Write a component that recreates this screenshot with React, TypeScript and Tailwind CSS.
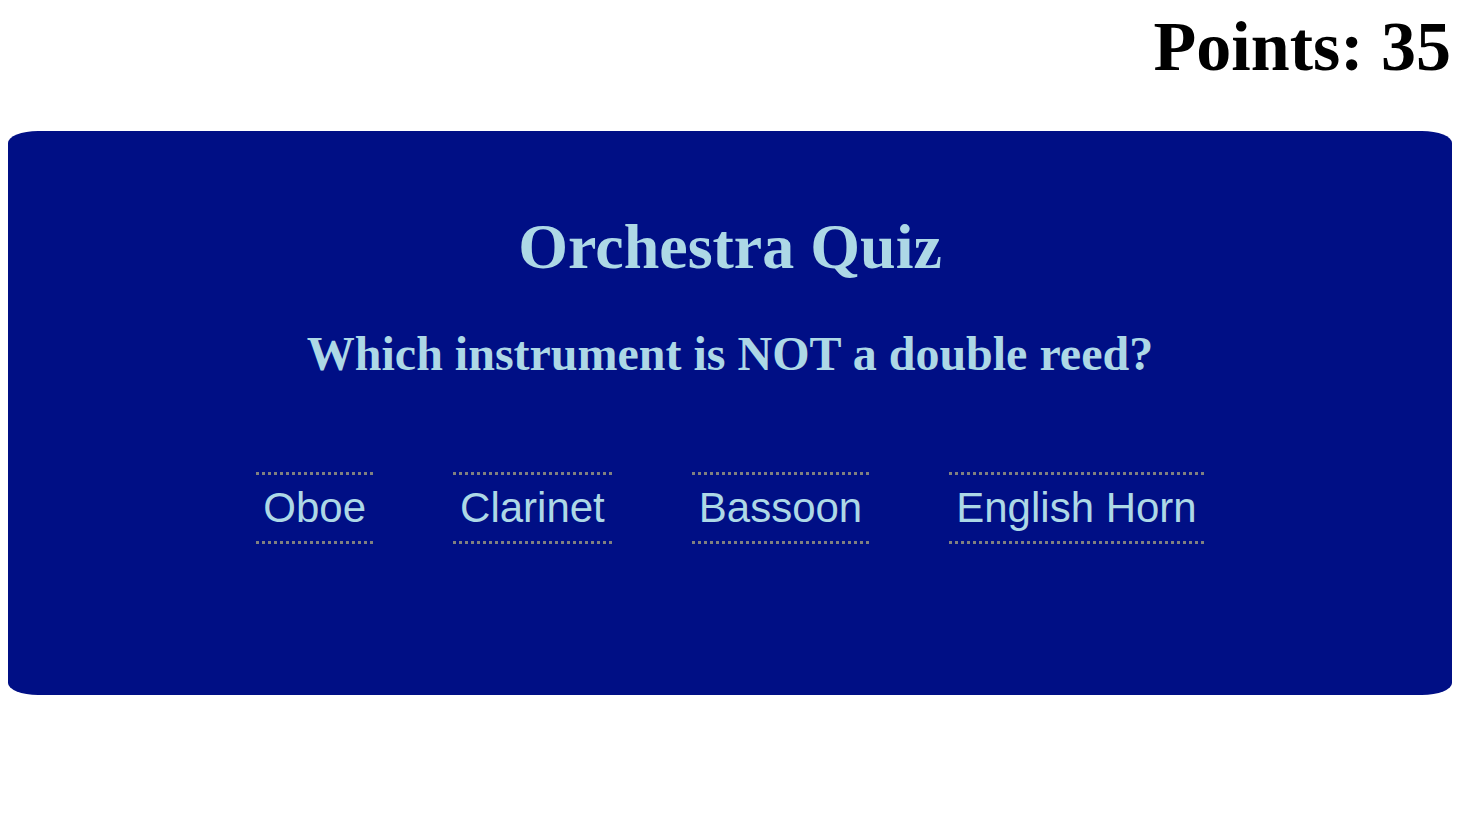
const OPTIONS = ["Oboe", "Clarinet", "Bassoon", "English Horn"];

export default function App() {
  return (
    <div className="min-h-screen bg-white font-['Liberation_Serif',serif]">
      {/* Score */}
      <div className="flex justify-end pr-[11px] pt-[5px]">
        <h2 className="text-[70px] font-bold leading-[84px] text-black">Points: 35</h2>
      </div>

      {/* Quiz panel */}
      <div className="ml-[8px] mr-[10px] mt-[42px] h-[564px] rounded-[30px/12px] bg-[#000f85] flex flex-col items-center pt-[78px]">
        <h1 className="text-[64px] font-bold leading-[76px] text-[#add8e6]">Orchestra Quiz</h1>
        <h3 className="mt-[40px] text-[48px] font-bold leading-[58px] text-[#add8e6]">
          Which instrument is NOT a double reed?
        </h3>
        <div className="mt-[89px] flex gap-[80px]">
          {OPTIONS.map((o) => (
            <button
              key={o}
              className="border-y-[3px] border-dotted border-[#808080] px-[7px] py-[6px] font-['Liberation_Sans',sans-serif] text-[42px] leading-[54px] text-[#add8e6]"
            >
              {o}
            </button>
          ))}
        </div>
      </div>
    </div>
  );
}
